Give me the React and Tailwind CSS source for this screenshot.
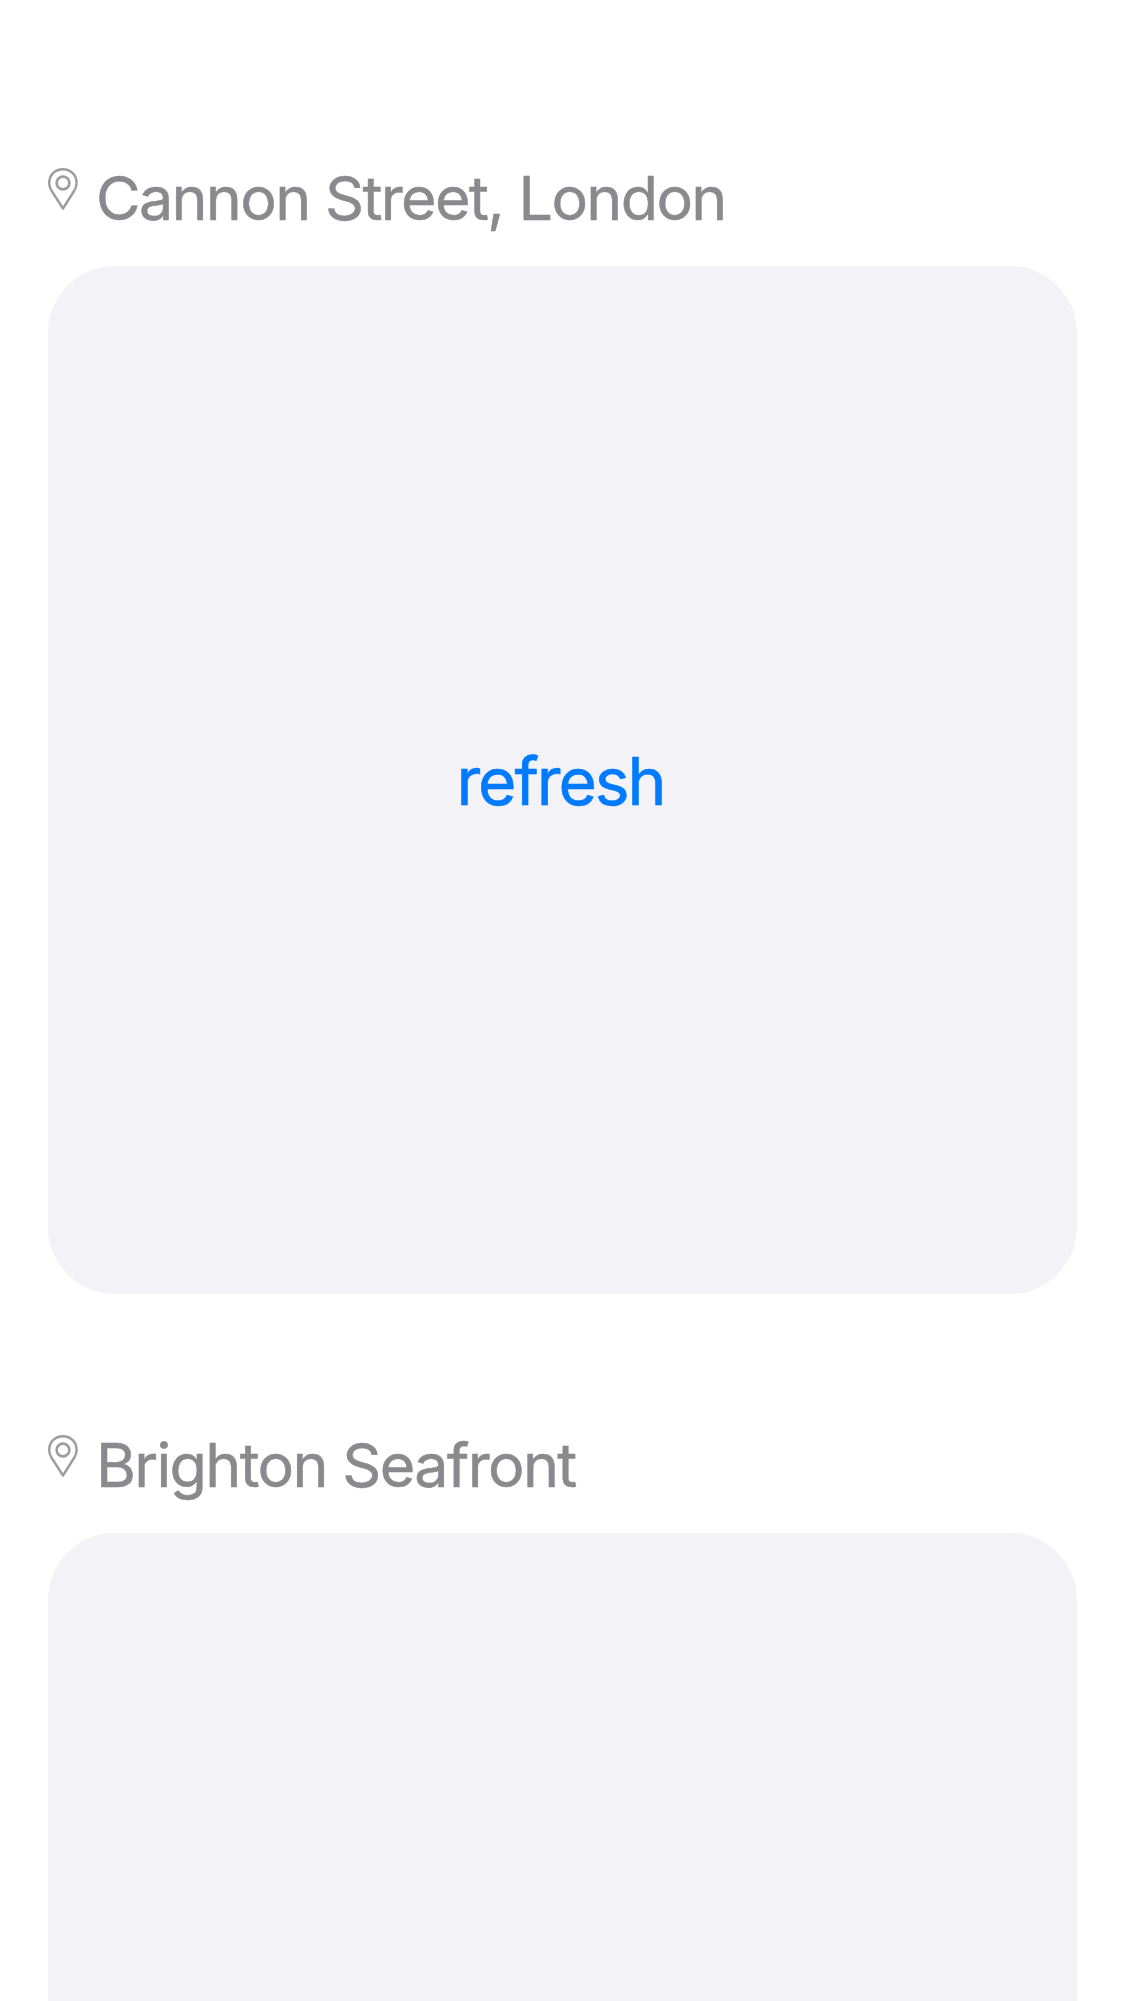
function Pin() {
  return (
    <svg className="mt-[2px] h-[42px] w-[30px] shrink-0" viewBox="0 0 30 42" fill="none" stroke="#9d9d9e">
      <path strokeWidth="2.4" strokeLinejoin="round" d="M15 40.5 L3.4 22.5 C1.9 20 1.2 17.6 1.2 14.9 C1.2 7 7 1.2 14.9 1.2 C22.8 1.2 28.6 7 28.6 14.9 C28.6 17.6 27.9 20 26.4 22.5 Z" />
      <circle cx="15" cy="15" r="6.4" strokeWidth="2.6" />
    </svg>
  );
}

function Place({ name, children }) {
  return (
    <section className="flex shrink-0 flex-col">
      <header className="flex h-[100px] items-start gap-[18px]">
        <Pin />
        <h2 className="whitespace-nowrap text-[61px] leading-[64px] tracking-[-1.66px] text-[#8a8a8e] [-webkit-text-stroke:0.5px_#8a8a8e]">{name}</h2>
      </header>
      <div className="flex h-[1028px] items-center justify-center rounded-[67px] bg-[#f2f2f7]">{children}</div>
    </section>
  );
}

export default function App() {
  return (
    <main className="flex h-[2001px] w-[1125px] flex-col gap-[139px] overflow-hidden bg-white px-12 pt-[166px] font-['Inter',sans-serif]">
      <Place name="Cannon Street, London">
        <button className="pt-[2px] pr-[4px] text-[66px] leading-[80px] tracking-[-2.1px] text-[#007aff] [-webkit-text-stroke:0.6px_#007aff]">refresh</button>
      </Place>
      <Place name="Brighton Seafront" />
    </main>
  );
}
